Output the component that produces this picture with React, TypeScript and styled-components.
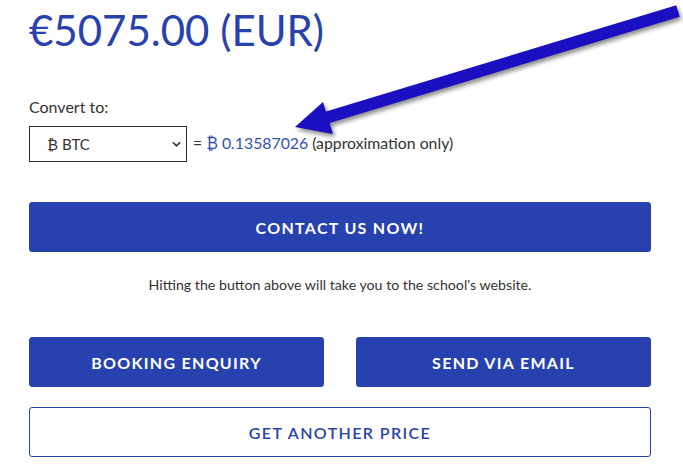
import React from 'react';
import styled, {createGlobalStyle} from "styled-components";

const GlobalStyle = createGlobalStyle`
  body {
    margin: 0;
    background: #ffffff;
    font-family: Lato, "Liberation Sans", sans-serif;
    color: #333333;
  }
`

const BLUE = "#2741ae";

export default function App() {
    return (
        <>
            <GlobalStyle/>
            <Page>
                <Price>€5075.00 (EUR)</Price>

                <ConvertLabel>Convert to:</ConvertLabel>
                <ConvertRow>
                    <SelectWrap>
                        <CurrencySelect defaultValue="BTC">
                            <option value="BTC">₿ BTC</option>
                            <option value="USD">$ USD</option>
                            <option value="GBP">£ GBP</option>
                        </CurrencySelect>
                        <Chevron viewBox="0 0 10 6">
                            <path d="M1 1 L5 5 L9 1" fill="none" stroke="#333" strokeWidth="1.8"/>
                        </Chevron>
                    </SelectWrap>
                    <Result>
                        = <Amount>₿ 0.13587026</Amount> (approximation only)
                    </Result>
                </ConvertRow>

                <ActionButton variant="primary" $top={40}>Contact us now!</ActionButton>

                <Hint>Hitting the button above will take you to the school's website.</Hint>

                <ButtonRow>
                    <ActionButton variant="primary">Booking enquiry</ActionButton>
                    <ActionButton variant="primary">Send via email</ActionButton>
                </ButtonRow>

                <ActionButton variant="secondary" $top={20}>Get another price</ActionButton>

                <Arrow viewBox="0 0 683 170">
                    <line x1="322" y1="119" x2="678" y2="11" stroke="#1b0fc2" strokeWidth="12"/>
                    <polygon points="295,127 323,102 333,134" fill="#1b0fc2"/>
                </Arrow>
            </Page>
        </>
    );
}

const Page = styled.div`
  position: relative;
  display: flex;
  flex-direction: column;
  width: 622px;
  padding: 6px 32px 8px 29px;
`

const Price = styled.h1`
  margin: 0;
  padding-top: 2px;
  font-size: 42px;
  line-height: 44px;
  font-weight: 400;
  color: ${BLUE};
`

const ConvertLabel = styled.label`
  margin-top: 45px;
  font-size: 16px;
  line-height: 20px;
  color: #333;
`

const ConvertRow = styled.div`
  display: flex;
  align-items: center;
  gap: 6px;
  margin-top: 9px;
`

const SelectWrap = styled.div`
  position: relative;
  width: 158px;
  height: 36px;
`

const CurrencySelect = styled.select`
  appearance: none;
  width: 100%;
  height: 100%;
  box-sizing: border-box;
  border: 1px solid #333;
  border-radius: 0;
  background: #fff;
  padding: 0 0 0 17px;
  font-family: Lato, "Liberation Sans", sans-serif;
  font-size: 15px;
  color: #333;
`

const Chevron = styled.svg`
  position: absolute;
  right: 6px;
  top: 15px;
  width: 9px;
  height: 6px;
  pointer-events: none;
`

const Result = styled.span`
  font-size: 15.8px;
  line-height: 18px;
  margin-top: -3px;
  color: #333;
`

const Amount = styled.span`
  color: #3150b4;
`

const ActionButton = styled.button<{ variant: "primary" | "secondary"; $top?: number }>`
  flex: none;
  height: 50px;
  margin-top: ${p => p.$top ?? 0}px;
  box-sizing: border-box;
  border-radius: 3px;
  border: 1px solid ${BLUE};
  background: ${p => p.variant === "primary" ? BLUE : "#fff"};
  color: ${p => p.variant === "primary" ? "#fff" : BLUE};
  font-family: Lato, "Liberation Sans", sans-serif;
  font-size: 16px;
  font-weight: ${p => p.variant === "primary" ? 700 : 600};
  letter-spacing: ${p => p.variant === "primary" ? "1.3px" : "1.4px"};
  text-transform: uppercase;
  cursor: pointer;
`

const Hint = styled.p`
  margin: 24px 0 0;
  font-size: 14.2px;
  line-height: 17px;
  text-align: center;
  color: #333;
`

const ButtonRow = styled.div`
  display: flex;
  gap: 32px;
  margin-top: 44px;

  & > button {
    flex: 1 1 0;
  }
`

const Arrow = styled.svg`
  position: absolute;
  left: 0;
  top: 0;
  width: 683px;
  height: 170px;
  pointer-events: none;
  filter: drop-shadow(2px 3px 2px rgba(0, 0, 0, 0.45));
`
